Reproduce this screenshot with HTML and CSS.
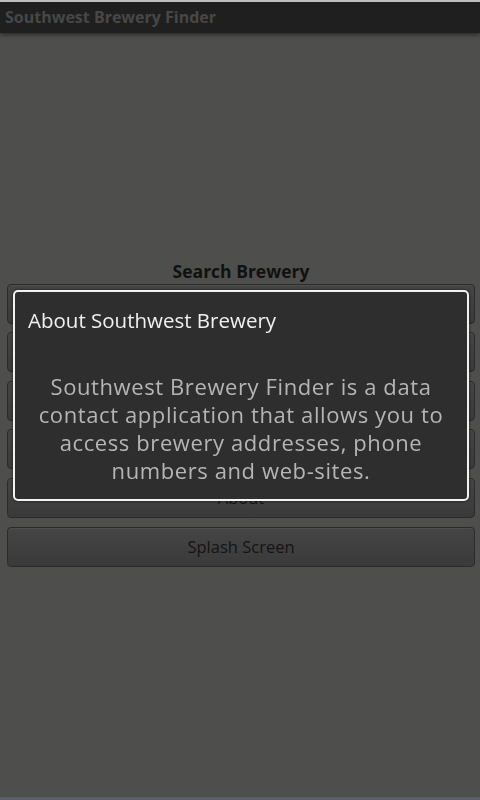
FILE: index.html
```html
<!DOCTYPE html>
<html lang="en">
  <head>
    <meta charset="UTF-8">
    <meta name="viewport" content="width=device-width, initial-scale=1.0">
    <title>Southwest Brewery Finder</title>
    <link rel="stylesheet" href="styles.css">
  </head>
  <body>
    <!-- Title Bar -->
    <div class="title-bar">Southwest Brewery Finder</div>

    <!-- Search Menu -->
    <div class="menu">
      <div class="menu-label">Search Brewery</div>
      <div class="menu-button">By Name</div>
      <div class="menu-button">By State</div>
      <div class="menu-button">By State &amp; City</div>
      <div class="menu-button">By City &amp; State</div>
      <div class="menu-button">About</div>
      <div class="menu-button">Splash Screen</div>
    </div>

    <!-- About Dialog -->
    <div class="dialog">
      <div class="dialog-title">About Southwest Brewery</div>
      <div class="dialog-text">Southwest Brewery Finder is a data contact application that allows you to access brewery addresses, phone numbers and web-sites.</div>
    </div>

    <div class="bottom-line"></div>
  </body>
</html>
```

FILE: styles.css
```css
html, body {
  height: 100%;
}

body {
  margin: 0;
  overflow: hidden;
  font-family: "Open Sans", "DejaVu Sans", sans-serif;
  background: #4e4f4c;
  display: flex;
  flex-direction: column;
}

.title-bar {
  height: 31px;
  border-top: 2px solid #bdbdbd;
  background: #1f1f1f;
  color: #474747;
  font-weight: bold;
  font-size: 16px;
  line-height: 30px;
  padding-left: 5px;
  box-shadow: 0 2px 4px rgba(0, 0, 0, 0.45);
}

.menu {
  display: flex;
  flex-direction: column;
  gap: 8.6px;
  padding: 227px 5px 0 7px;
  flex: 1;
}

.menu-label {
  text-align: center;
  font-weight: bold;
  font-size: 17.5px;
  color: #111;
  line-height: 22px;
  margin-bottom: -7px;
}

.menu-button {
  height: 38px;
  border: 1px solid #2b2b2b;
  border-radius: 4px;
  background: linear-gradient(#454545, #3a3a3a);
  box-shadow: inset 0 1px 0 rgba(255, 255, 255, 0.05);
  color: #141414;
  font-size: 16.5px;
  line-height: 38px;
  text-align: center;
}

.dialog {
  position: fixed;
  left: 13px;
  top: 290px;
  width: 452px;
  height: 207px;
  border: 2px solid #f2f2f2;
  border-radius: 5px;
  background: #2e2e2e;
  box-shadow: 0 0 3px rgba(0, 0, 0, 0.6);
}

.dialog-title {
  color: #f0f0f0;
  font-size: 20.5px;
  line-height: 28px;
  padding: 14px 0 0 13px;
}

.dialog-text {
  color: #b5b5b5;
  font-size: 22px;
  letter-spacing: 0.6px;
  line-height: 28px;
  text-align: center;
  padding: 38px 10px 0;
}

.bottom-line {
  height: 3px;
  background: #5b6068;
}
```
